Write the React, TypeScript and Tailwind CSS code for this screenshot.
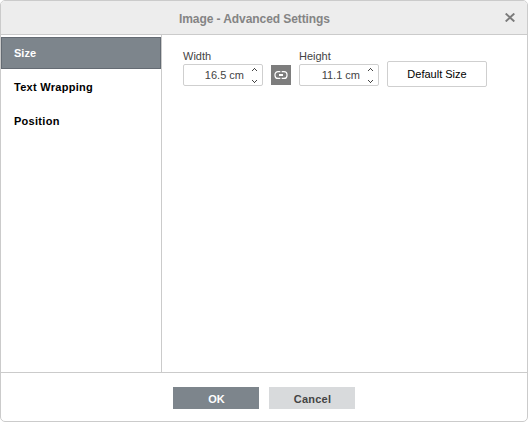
import React from "react";

function Stepper() {
  return (
    <svg width="7" height="15" viewBox="0 0 7 15" shapeRendering="crispEdges" className="mt-px shrink-0" fill="#444">
      <path d="M3 0h1v1h-1zM2 1h1v1h-1zM4 1h1v1h-1zM1 2h1v1h-1zM5 2h1v1h-1zM1 12h1v1h-1zM5 12h1v1h-1zM2 13h1v1h-1zM4 13h1v1h-1zM3 14h1v1h-1z" />
    </svg>
  );
}

function Metric({ label, value }: { label: string; value: string }) {
  return (
    <div className="w-20">
      <div className="h-[15px] leading-[15px] text-[#444]">{label}</div>
      <div className="flex h-[22px] items-center justify-end rounded-xs border border-[#cfcfcf] bg-white pr-1">
        <span className="mr-[7px] leading-[15px] text-[#444]">{value}</span>
        <Stepper />
      </div>
    </div>
  );
}

export default function App() {
  return (
    <div className="flex h-[422px] w-[528px] flex-col overflow-hidden rounded-[5px] border border-[#cbcbcb] bg-white font-['Liberation_Sans',Arial,sans-serif] text-[11px]">
      <header className="flex h-[34px] shrink-0 items-center border-b border-[#cbcbcb] bg-[#ededed] pl-[178px]">
        <h1 className="whitespace-nowrap pt-[3px] text-[12px] font-bold tracking-[-0.08px] text-[#848484]">Image - Advanced Settings</h1>
        <button className="mr-3 ml-auto" aria-label="Close">
          <svg width="10" height="9" viewBox="0 0 10 9" stroke="#7b7b7b" strokeWidth="1.9">
            <path d="M.7.5 9.300 8.500M9.300.5.7 8.500" />
          </svg>
        </button>
      </header>
      <main className="flex h-[337px] shrink-0">
        <nav className="w-[161px] shrink-0 border-r border-[#cbcbcb] pt-[2px] font-bold tracking-[0.28px] text-black">
          <div className="flex h-8 items-center border border-[#646b73] bg-[#7d858c] pl-3 tracking-normal text-white">Size</div>
          <div className="mt-[2px] flex h-8 items-center pl-[13px]">Text Wrapping</div>
          <div className="mt-[2px] flex h-8 items-center pl-[13px]">Position</div>
        </nav>
        <section className="flex items-start gap-2 pt-[14px] pl-[21px]">
          <Metric label="Width" value="16.5 cm" />
          <button className="mt-4 flex size-5 items-center justify-center bg-[#7d7d7d]" aria-label="Constant proportions">
            <svg width="14" height="8" viewBox="0 0 14 8" fill="none" stroke="#fff" strokeWidth="1.2">
              <path d="M6.300.6H4a3 3 0 0 0-3 3v.8a3 3 0 0 0 3 3h2.300M7.700.6H10a3 3 0 0 1 3 3v.8a3 3 0 0 1-3 3H7.700" />
              <path d="M5 4h4" strokeWidth="2" />
            </svg>
          </button>
          <Metric label="Height" value="11.1 cm" />
          <button className="mt-3 h-[26px] w-[100px] rounded-xs border border-[#cfcfcf] bg-white text-black">Default Size</button>
        </section>
      </main>
      <footer className="flex flex-1 gap-[10px] border-t border-[#cbcbcb] pt-[14px] pl-[172px] font-bold">
        <button className="h-[22px] w-[86px] bg-[#7d858c] pt-[3px] pl-px text-white">OK</button>
        <button className="h-[22px] w-[86px] bg-[#d8dadc] pt-[3px] pl-px tracking-[0.2px] text-[#444]">Cancel</button>
      </footer>
    </div>
  );
}
